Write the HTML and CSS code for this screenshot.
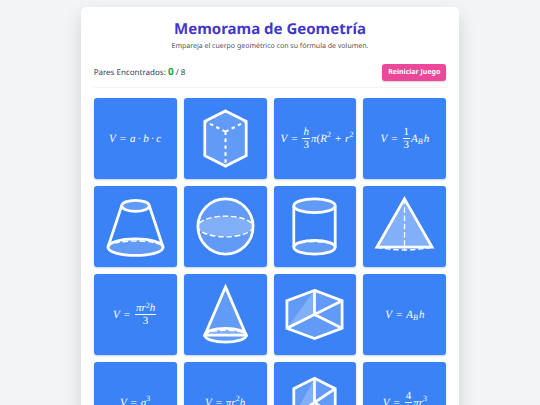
FILE: index.html
```html
<!DOCTYPE html>
<html lang="es">
<head>
<meta charset="utf-8">
<meta name="viewport" content="width=device-width, initial-scale=1">
<title>Memorama de Geometría</title>
<link rel="stylesheet" href="styles.css">
</head>
<body>
<main class="panel">
  <header class="header">
    <h1>Memorama de Geometría</h1>
    <p>Empareja el cuerpo geométrico con su fórmula de volumen.</p>
  </header>
  <div class="toolbar">
    <div class="score">Pares Encontrados: <strong>0</strong> / 8</div>
    <button class="reset" type="button">Reiniciar Juego</button>
  </div>
  <div class="board">
    <div class="card"><span class="math"><i>V</i><span class="rel">=</span><i>a</i><span class="dot">·</span><i>b</i><span class="dot">·</span><i>c</i></span></div>
    <div class="card">
      <svg class="shape" viewBox="0 0 100 100"><path class="fill line" d="M50 10 80 25V75L50 90 20 75V25Z"/><path class="dash dash-short" d="M50 40 20 25M50 40 80 25M50 40V90"/></svg>
    </div>
    <div class="card card-long"><span class="math"><i>V</i><span class="rel">=</span><span class="frac"><i>h</i><span>3</span></span><i>π</i>(<i>R</i><sup>2</sup><span class="bin">+</span><i>r</i><sup>2</sup></span></div>
    <div class="card"><span class="math"><i>V</i><span class="rel">=</span><span class="frac"><span>1</span><span>3</span></span><i>A</i><sub><i>B</i></sub><i>h</i></span></div>

    <div class="card">
      <svg class="shape" viewBox="0 0 100 100"><ellipse class="fill line" cx="50" cy="80" rx="40" ry="12"/><ellipse class="fill line" cx="50" cy="20" rx="20" ry="8"/><path class="line" d="M30 20 10 80M70 20 90 80"/><path class="dash" d="M10 80A40 9 0 0 1 90 80"/></svg>
    </div>
    <div class="card">
      <svg class="shape" viewBox="0 0 100 100"><circle class="fill line" cx="50" cy="50" r="40"/><ellipse class="fill dash" cx="50" cy="50" rx="40" ry="15"/></svg>
    </div>
    <div class="card">
      <svg class="shape" viewBox="0 0 100 100"><ellipse class="fill line" cx="50" cy="80" rx="30" ry="10"/><ellipse class="fill line" cx="50" cy="20" rx="30" ry="10"/><path class="line" d="M20 20V80M80 20V80"/><path class="dash" d="M20 80A30 8 0 0 1 80 80"/></svg>
    </div>
    <div class="card">
      <svg class="shape" viewBox="0 0 100 100"><path class="fill-strong line" d="M50 10 90 80H10Z"/><path class="dash" d="M50 10V85M10 80Q50 88 90 80"/></svg>
    </div>

    <div class="card"><span class="math"><i>V</i><span class="rel">=</span><span class="frac"><span><i>πr</i><sup>2</sup><i>h</i></span><span>3</span></span></span></div>
    <div class="card">
      <svg class="shape" viewBox="0 0 100 100"><ellipse class="fill line" cx="50" cy="80" rx="30" ry="10"/><path class="fill line" d="M50 10 80 80H20Z"/><path class="dash" d="M20 80A30 7 0 0 1 80 80"/></svg>
    </div>
    <div class="card">
      <svg class="shape" viewBox="0 0 100 100"><path class="fill line" d="M50 15 90 30V70L50 85 10 70V30Z"/><path class="fill" d="M50 15V50L10 70Z"/><path class="line" d="M50 15V50M10 70 90 30M50 50 90 70"/></svg>
    </div>
    <div class="card"><span class="math"><i>V</i><span class="rel">=</span><i>A</i><sub><i>B</i></sub><i>h</i></span></div>

    <div class="card"><span class="math"><i>V</i><span class="rel">=</span><i>a</i><sup>3</sup></span></div>
    <div class="card"><span class="math"><i>V</i><span class="rel">=</span><i>πr</i><sup>2</sup><i>h</i></span></div>
    <div class="card">
      <svg class="shape" viewBox="0 0 100 100"><path class="fill line" d="M50 15 80 30V70L50 85 20 70V30Z"/><path class="fill" d="M50 15V50L20 70Z"/><path class="line" d="M50 15V50M20 70 50 50 80 30M50 50 80 70"/></svg>
    </div>
    <div class="card"><span class="math"><i>V</i><span class="rel">=</span><span class="frac"><span>4</span><span>3</span></span><i>πr</i><sup>3</sup></span></div>
  </div>
</main>
</body>
</html>
```
FILE: styles.css
```css
* {
  box-sizing: border-box;
}

body {
  margin: 0;
  padding: 7px;
  background: #f3f4f6;
  color: #374151;
  font-family: "Noto Sans", "Open Sans", sans-serif;
  text-rendering: geometricPrecision;
}

.panel {
  width: 72%;
  min-width: 320px;
  margin: 0 auto;
  padding: 13px;
  background: #fff;
  border-radius: 5px;
  box-shadow: 0 8px 18px rgba(0, 0, 0, 0.14);
}

.header {
  text-align: center;
}

h1 {
  margin: 0;
  font-size: 15px;
  line-height: 18px;
  font-weight: 700;
  color: #4338ca;
}

.header p {
  margin: 4px 0 0;
  font-size: 7px;
  line-height: 10px;
  color: #4b5563;
}

.toolbar {
  display: flex;
  align-items: center;
  justify-content: space-between;
  margin: 10px 0;
  padding-bottom: 5px;
  border-bottom: 1px solid #f3f4f6;
}

.score {
  font-size: 8px;
  line-height: 18px;
}

.score strong {
  font-size: 10px;
  color: #16a34a;
}

.reset {
  padding: 0 6px;
  border: 0;
  border-radius: 3px;
  background: #ec4899;
  box-shadow: 0 1px 2px rgba(0, 0, 0, 0.2);
  color: #fff;
  font: 700 7px/17px "Noto Sans", "Open Sans", sans-serif;
  text-rendering: inherit;
  cursor: pointer;
}

.board {
  display: grid;
  grid-template-columns: repeat(4, minmax(0, 1fr));
  grid-auto-rows: 81px;
  gap: 7px;
}

.card {
  display: flex;
  align-items: center;
  justify-content: center;
  overflow: hidden;
  border-radius: 3px;
  background: #3b82f6;
  box-shadow: 0 1px 2px rgba(59, 130, 246, 0.35);
  color: #fff;
}

.card-long {
  justify-content: flex-start;
  padding-left: 7px;
}

.shape {
  width: 69px;
  height: 69px;
  fill: none;
}

.fill {
  fill: rgba(255, 255, 255, 0.2);
}

.fill-strong {
  fill: rgba(255, 255, 255, 0.36);
}

.line {
  stroke: #fff;
  stroke-width: 4;
}

.dash {
  stroke: #fff;
  stroke-width: 2;
  stroke-dasharray: 8 4;
}

.dash-short {
  stroke-width: 3;
  stroke-dasharray: 5 5;
}

.math {
  display: inline-flex;
  align-items: center;
  font-family: "Liberation Serif", serif;
  font-size: 11px;
  line-height: 12px;
  white-space: nowrap;
}

.math sup,
.math sub {
  font-size: 8px;
  line-height: 8px;
}

.math sup {
  padding-bottom: 7px;
}

.math .frac sup {
  padding: 0;
  vertical-align: 3px;
}

.math sub {
  padding: 6px 1px 0 0;
}

.rel {
  margin: 0 4px;
}

.dot {
  margin: 0 2px;
}

.bin {
  margin: 0 4px;
}

.frac {
  display: inline-flex;
  flex-direction: column;
  align-items: center;
  margin: 0 1px;
}

.frac > :first-child {
  padding: 0 1px;
  border-bottom: 1px solid #fff;
}
```
